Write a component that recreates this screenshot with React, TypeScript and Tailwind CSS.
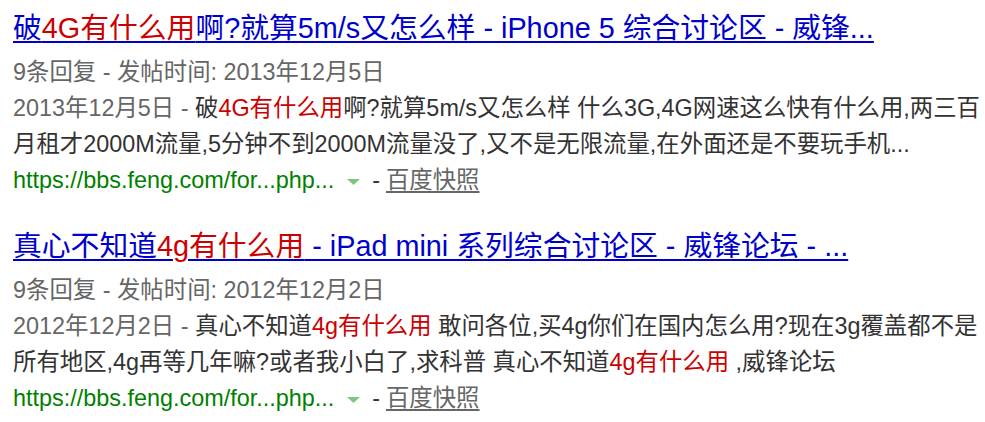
const FONT = "font-['Liberation_Sans','Noto_Sans_CJK_SC',sans-serif]";

type Part = { text: string; em?: boolean };

type Result = {
  title: Part[];
  meta: string;
  date: string;
  lines: Part[][];
  url: string;
};

const RESULTS: Result[] = [
  {
    title: [
      { text: "破" },
      { text: "4G有什么用", em: true },
      { text: "啊?就算5m/s又怎么样 - iPhone 5 综合讨论区 - 威锋..." },
    ],
    meta: "9条回复 - 发帖时间: 2013年12月5日",
    date: "2013年12月5日",
    lines: [
      [
        { text: "破" },
        { text: "4G有什么用", em: true },
        { text: "啊?就算5m/s又怎么样 什么3G,4G网速这么快有什么用,两三百" },
      ],
      [{ text: "月租才2000M流量,5分钟不到2000M流量没了,又不是无限流量,在外面还是不要玩手机..." }],
    ],
    url: "https://bbs.feng.com/for...php...",
  },
  {
    title: [
      { text: "真心不知道" },
      { text: "4g有什么用", em: true },
      { text: " - iPad mini 系列综合讨论区 - 威锋论坛 - ..." },
    ],
    meta: "9条回复 - 发帖时间: 2012年12月2日",
    date: "2012年12月2日",
    lines: [
      [
        { text: "真心不知道" },
        { text: "4g有什么用", em: true },
        { text: " 敢问各位,买4g你们在国内怎么用?现在3g覆盖都不是" },
      ],
      [
        { text: "所有地区,4g再等几年嘛?或者我小白了,求科普 真心不知道" },
        { text: "4g有什么用", em: true },
        { text: " ,威锋论坛" },
      ],
    ],
    url: "https://bbs.feng.com/for...php...",
  },
];

function renderParts(parts: Part[]) {
  return parts.map((p, i) =>
    p.em ? (
      <span key={i} className="text-[#cc0000]">
        {p.text}
      </span>
    ) : (
      <span key={i}>{p.text}</span>
    ),
  );
}

function ResultItem({ result }: { result: Result }) {
  return (
    <div>
      <h3 className="whitespace-nowrap text-[28.8px] leading-[40px] text-[#0000cc]">
        <a href="#" className="underline decoration-[1.5px] underline-offset-[3px]">
          {renderParts(result.title)}
        </a>
      </h3>
      <div className="mt-[6px] text-[23.4px] leading-[36px]">
        <p className="whitespace-nowrap text-[#666666]">{result.meta}</p>
        {result.lines.map((line, i) => (
          <p key={i} className="whitespace-nowrap text-[#333333]">
            {i === 0 && <span className="text-[#666666]">{result.date} - </span>}
            {renderParts(line)}
          </p>
        ))}
        <div className="flex items-center whitespace-nowrap">
          <span className="text-[#008000]">{result.url}</span>
          <svg width="13" height="6" viewBox="0 0 13 6" className="ml-[13px] mt-[4px]">
            <polygon points="0,0 13,0 6.5,6" fill="#7fc47f" />
          </svg>
          <span className="ml-[12px] text-[#333333]">-</span>
          <a href="#" className="ml-[6px] text-[#666666] underline decoration-[1.5px] underline-offset-[3px]">
            百度快照
          </a>
        </div>
      </div>
    </div>
  );
}

export default function App() {
  return (
    <main className={`min-h-screen bg-white pl-[13px] pt-[8px] ${FONT}`}>
      <div className="flex flex-col gap-[28px]">
        {RESULTS.map((r, i) => (
          <ResultItem key={i} result={r} />
        ))}
      </div>
    </main>
  );
}
